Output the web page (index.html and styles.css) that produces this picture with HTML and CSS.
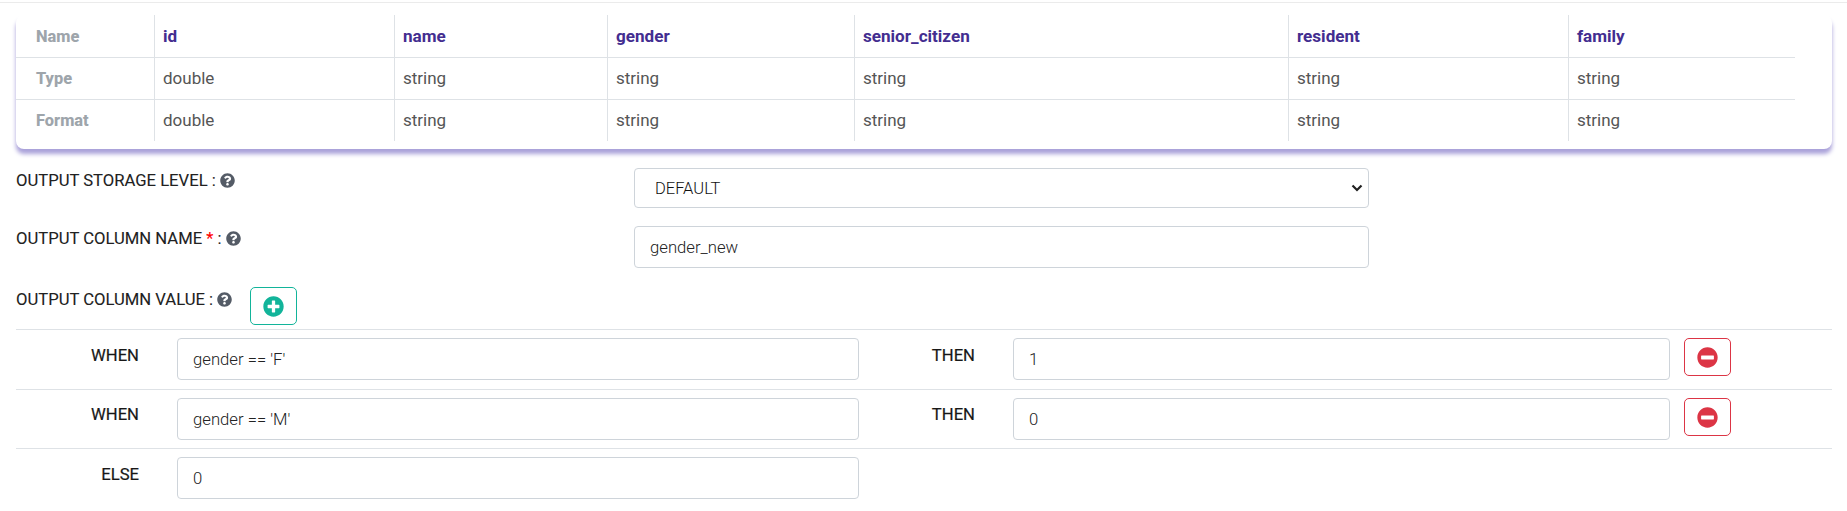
FILE: index.html
```
<!DOCTYPE html>
<html lang="en">
<head>
<meta charset="utf-8">
<title>Case When</title>
<link rel="stylesheet" href="styles.css">
</head>
<body>
<svg width="0" height="0" class="defs">
  <symbol id="help" viewBox="0 0 512 512"><path fill="currentColor" d="M504 256c0 136.997-111.043 248-248 248S8 392.997 8 256C8 119.083 119.043 8 256 8s248 111.083 248 248zM262.655 90c-54.497 0-89.255 22.957-116.549 63.758-3.536 5.286-2.353 12.415 2.715 16.258l34.699 26.310c5.205 3.947 12.621 3.008 16.665-2.122 17.864-22.658 30.113-35.797 57.303-35.797 20.429 0 45.698 13.148 45.698 32.958 0 14.976-12.363 22.667-32.534 33.976C247.128 238.528 216 254.941 216 296v4c0 6.627 5.373 12 12 12h56c6.627 0 12-5.373 12-12v-1.333c0-28.462 83.186-29.647 83.186-106.667 0-58.002-60.165-102-116.531-102zM256 338c-25.365 0-46 20.635-46 46 0 25.364 20.635 46 46 46s46-20.636 46-46c0-25.365-20.635-46-46-46z"/></symbol>
  <symbol id="plus" viewBox="0 0 512 512"><path fill="currentColor" d="M256 8C119 8 8 119 8 256s111 248 248 248 248-111 248-248S393 8 256 8zm144 276c0 6.600-5.400 12-12 12h-92v92c0 6.600-5.400 12-12 12h-56c-6.600 0-12-5.400-12-12v-92h-92c-6.600 0-12-5.400-12-12v-56c0-6.600 5.400-12 12-12h92v-92c0-6.600 5.400-12 12-12h56c6.600 0 12 5.400 12 12v92h92c6.600 0 12 5.400 12 12v56z"/></symbol>
  <symbol id="minus" viewBox="0 0 512 512"><path fill="currentColor" d="M256 8C119 8 8 119 8 256s111 248 248 248 248-111 248-248S393 8 256 8zM112 302c-6.600 0-12-5.400-12-12v-68c0-6.600 5.400-12 12-12h288c6.600 0 12 5.400 12 12v68c0 6.600-5.400 12-12 12H112z"/></symbol>
</svg>
<main class="page">
  <section class="schema-card">
    <div class="schema">
      <div class="cell head">Name</div><div class="cell col">id</div><div class="cell col">name</div><div class="cell col">gender</div><div class="cell col">senior_citizen</div><div class="cell col">resident</div><div class="cell col">family</div>
      <div class="cell head">Type</div><div class="cell">double</div><div class="cell">string</div><div class="cell">string</div><div class="cell">string</div><div class="cell">string</div><div class="cell">string</div>
      <div class="cell head">Format</div><div class="cell">double</div><div class="cell">string</div><div class="cell">string</div><div class="cell">string</div><div class="cell">string</div><div class="cell">string</div>
    </div>
  </section>
  <div class="field storage">
    <label class="label">OUTPUT STORAGE LEVEL : <svg class="help"><use href="#help"/></svg></label>
    <div class="select-wrap">
      <select class="control select"><option>DEFAULT</option></select>
      <svg class="chevron" viewBox="0 0 12 8"><path d="M1.500 1.500 6 6l4.500-4.500" fill="none" stroke="#212121" stroke-width="2.200"/></svg>
    </div>
  </div>
  <div class="field column">
    <label class="label">OUTPUT COLUMN NAME <span class="required">*</span> : <svg class="help"><use href="#help"/></svg></label>
    <input class="control" value="gender_new">
  </div>
  <div class="value-bar">
    <label class="label">OUTPUT COLUMN VALUE : <svg class="help"><use href="#help"/></svg></label>
    <button class="btn add"><svg class="icon"><use href="#plus"/></svg></button>
  </div>
  <div class="rule">
    <span class="keyword">WHEN</span><input class="control" value="gender == 'F'">
    <span class="keyword">THEN</span><input class="control" value="1">
    <button class="btn remove"><svg class="icon"><use href="#minus"/></svg></button>
  </div>
  <div class="rule short">
    <span class="keyword">WHEN</span><input class="control" value="gender == 'M'">
    <span class="keyword">THEN</span><input class="control" value="0">
    <button class="btn remove"><svg class="icon"><use href="#minus"/></svg></button>
  </div>
  <div class="rule">
    <span class="keyword">ELSE</span><input class="control" value="0">
  </div>
</main>
</body>
</html>
```
FILE: styles.css
```
* { box-sizing: border-box; }
body {
  margin: 0;
  background: #fff;
  color: #212529;
  font: 16.65px/24px Roboto, sans-serif;
}
.defs { display: block; }
.page {
  margin-top: 2px;
  padding: 12px 15px 0 16px;
  border-top: 1px solid #ebebeb;
  height: 509px;
  overflow: hidden;
}
.schema-card {
  height: 134px;
  border-radius: 8px;
  background: #fff;
  box-shadow: 0 5px 4px #aaa2da;
}
.schema {
  display: grid;
  grid-template-columns: 138px 240px 213px 247px 434px 280px 227px;
  grid-template-rows: 43px 42px 41px;
  width: 1779px;
}
.cell {
  padding: 8px 8px;
  color: #555;
  font-size: 17px;
  border-left: 1px solid #dee2e6;
  border-bottom: 1px solid #dee2e6;
}
.cell:nth-child(-n+7) { padding-top: 9px; }
.cell:nth-child(n+15) { border-bottom: 0; }
.cell.head {
  padding-top: 9px;
  padding-left: 20px;
  border-left: 0;
  color: #9ea5ab;
  font-size: 16.4px;
  font-weight: 800;
}
.cell.head:first-child { padding-top: 10px; }
.cell.col { color: #432d90; font-size: 17.1px; font-weight: 700; }
.field {
  display: grid;
  grid-template-columns: 618px 735px;
  align-items: start;
}
.storage { margin-top: 19px; }
.column { margin-top: 18px; }
.label {
  padding-top: 1px;
  white-space: nowrap;
  color: #212121;
  -webkit-text-stroke: .1px;
}
.required { color: #f00; }
.help {
  width: 15px;
  height: 15px;
  color: #545b66;
  vertical-align: -2px;
}
.control {
  width: 100%;
  height: 42px;
  padding: 0 15px;
  border: 1px solid #ced4da;
  border-radius: 4px;
  background: #fff;
  color: #222;
  font: 300 16.7px/24px Roboto, sans-serif;
}
.select-wrap { display: grid; align-items: center; }
.select-wrap > * { grid-area: 1 / 1; }
.select {
  height: 40px;
  padding: 1px 15px 0 20px;
  color: #111;
  font-size: 16.5px;
  appearance: none;
}
.chevron {
  width: 12px;
  height: 8px;
  margin-right: 6px;
  justify-self: end;
  pointer-events: none;
}
.value-bar {
  display: flex;
  align-items: flex-start;
  gap: 18px;
  height: 42px;
  margin-top: 19px;
}
.value-bar .label { width: 216px; }
.btn {
  display: flex;
  align-items: center;
  justify-content: center;
  width: 47px;
  height: 38px;
  padding: 0;
  border: 1px solid;
  border-radius: 5px;
  background: #fff;
}
.add { color: #12b49a; }
.remove { margin-left: 14px; color: #dc3545; }
.icon { width: 21px; height: 21px; }
.rule {
  display: grid;
  grid-template-columns: 161px 682px 154px 657px 61px;
  align-items: start;
  height: 60px;
  padding-top: 8px;
  border-top: 1px solid #dee2e6;
}
.short { height: 59px; }
.keyword {
  padding: 6px 38px 0 0;
  text-align: right;
  color: #181818;
  -webkit-text-stroke: .2px;
}
.short .keyword { padding-top: 5px; }
```
